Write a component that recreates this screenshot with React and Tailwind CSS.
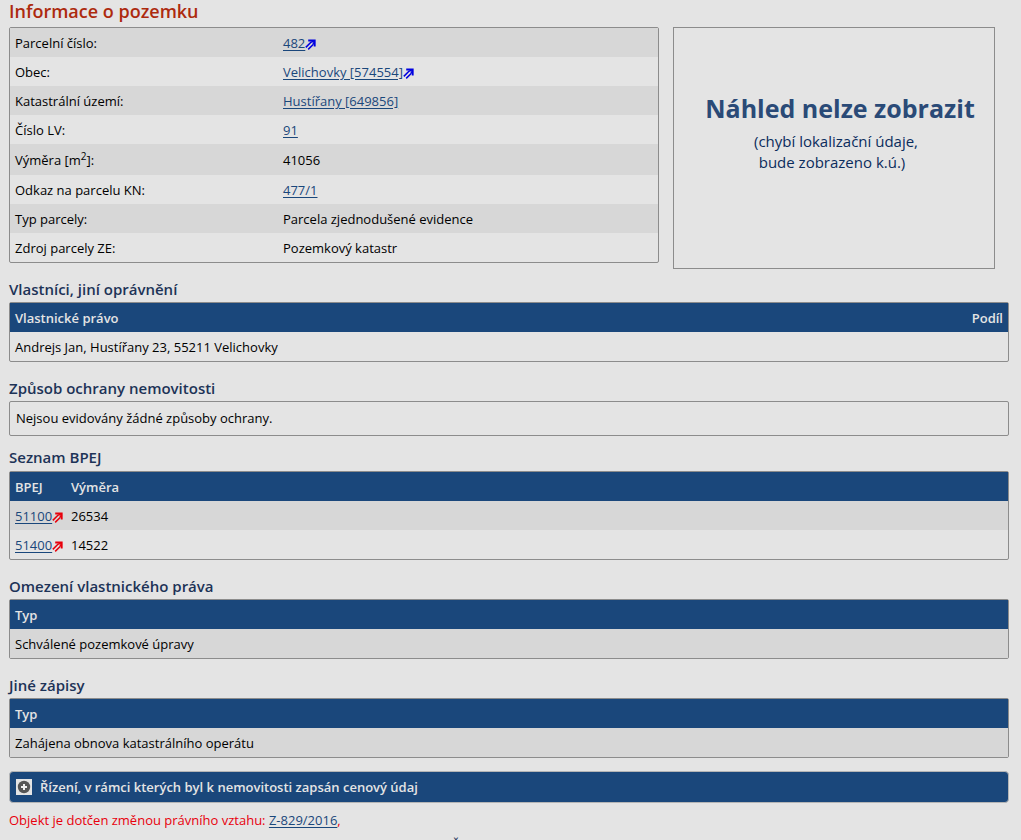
import React from "react";

function ExternalArrow({ className }) {
  return (
    <svg viewBox="0 0 11 11" className={`inline-block h-[11px] w-[11px] align-[-2px] ${className}`} fill="none" stroke="currentColor" aria-hidden="true">
      <path d="M0.8 8.4 L6.2 3 M3.2 10.4 L8.4 5.2" strokeWidth="1.5" />
      <path d="M3.2 1.5 H9.7 V7.6" strokeWidth="1.9" />
      <path d="M6.2 3.4 L9 1.6 M8 5 L9.6 3" strokeWidth="1.6" />
    </svg>
  );
}

function Link({ children, arrow }) {
  return (
    <a href="#" className="text-[#1a477b] underline underline-offset-2">
      {children}
      {arrow && <ExternalArrow className={arrow} />}
    </a>
  );
}

function Heading({ children, tight }) {
  return (
    <h2 className={`${tight ? "pt-[9px] pb-[2px]" : "pt-[14px] pb-px"} text-[15px] leading-6 font-semibold text-[#1d3357]`}>
      {children}
    </h2>
  );
}

const tableClass = "w-full border-separate border-spacing-0 rounded-[2px] border border-[#8c8c8c] text-left";
const headRow = "h-[29px] bg-[#1a477b] text-[#e4e4e4]";
const headCell = "px-[5px] font-semibold";
const shaded = "h-[29px] bg-[#d7d7d7]";
const plain = "h-[29px]";

const details = [
  ["Parcelní číslo:", <Link arrow="text-[#0000e0]">482</Link>],
  ["Obec:", <Link arrow="text-[#0000e0]">Velichovky [574554]</Link>],
  ["Katastrální území:", <Link>Hustířany [649856]</Link>],
  ["Číslo LV:", <Link>91</Link>],
  [<>Výměra [m<sup className="text-[10px]">2</sup>]:</>, "41056"],
  ["Odkaz na parcelu KN:", <Link>477/1</Link>],
  ["Typ parcely:", "Parcela zjednodušené evidence"],
  ["Zdroj parcely ZE:", "Pozemkový katastr"],
];

function TypeTable({ value }) {
  return (
    <table className={tableClass}>
      <thead>
        <tr className={headRow}>
          <th scope="col" className={headCell}>Typ</th>
        </tr>
      </thead>
      <tbody>
        <tr className={shaded}>
          <td className="px-[5px]">{value}</td>
        </tr>
      </tbody>
    </table>
  );
}

export default function App() {
  return (
    <main className="h-screen overflow-hidden bg-[#e4e4e4] pr-3 pl-[9px] font-['Open_Sans','Noto_Sans',sans-serif] text-[13px] leading-5 text-black">
      <h1 className="pb-[5px] text-[18px] leading-[22px] font-semibold text-[#ad2a0e]">Informace o pozemku</h1>

      <div className="flex items-start gap-[14px]">
        <table className={`${tableClass} flex-[650]`}>
          <tbody>
            {details.map(([label, value], i) => (
              <tr key={i} className={i % 2 === 0 ? (i === 4 ? "h-[31px] bg-[#d7d7d7]" : shaded) : plain}>
                <th scope="row" className="w-[268px] px-[5px] font-normal">{label}</th>
                <td className="px-[5px]">{value}</td>
              </tr>
            ))}
          </tbody>
        </table>
        <div className="mr-[14px] flex min-h-[242px] w-[322px] shrink-0 flex-col items-center border border-[#8c8c8c] pt-16 pl-3 text-[#0b2c5c]">
          <strong className="text-[25px] leading-8 font-bold text-[#2a4a77]">Náhled nelze zobrazit</strong>
          <p className="mt-[7px] pr-2 text-center text-[15px] leading-[21px]">
            <span className="block">(chybí lokalizační údaje,</span>
            <span className="block pr-2">bude zobrazeno k.ú.)</span>
          </p>
        </div>
      </div>

      <div className="-mt-[6px]">
        <Heading>Vlastníci, jiní oprávnění</Heading>
        <table className={tableClass}>
          <thead>
            <tr className={headRow}>
              <th scope="col" className={headCell}>Vlastnické právo</th>
              <th scope="col" className={`${headCell} text-right`}>Podíl</th>
            </tr>
          </thead>
          <tbody>
            <tr className={plain}>
              <td className="px-[5px]">Andrejs Jan, Hustířany 23, 55211 Velichovky</td>
              <td />
            </tr>
          </tbody>
        </table>
      </div>

      <Heading>Způsob ochrany nemovitosti</Heading>
      <p className="rounded-[2px] border border-[#8c8c8c] px-[6px] py-[7px] leading-[19px]">Nejsou evidovány žádné způsoby ochrany.</p>

      <Heading tight>Seznam BPEJ</Heading>
      <table className={tableClass}>
        <thead>
          <tr className={headRow}>
            <th scope="col" className={`${headCell} w-14`}>BPEJ</th>
            <th scope="col" className={headCell}>Výměra</th>
          </tr>
        </thead>
        <tbody>
          <tr className={shaded}>
            <td className="pl-[5px] whitespace-nowrap"><Link arrow="text-[#e8000c]">51100</Link></td>
            <td className="px-[5px]">26534</td>
          </tr>
          <tr className={plain}>
            <td className="pl-[5px] whitespace-nowrap"><Link arrow="text-[#e8000c]">51400</Link></td>
            <td className="px-[5px]">14522</td>
          </tr>
        </tbody>
      </table>

      <Heading>Omezení vlastnického práva</Heading>
      <TypeTable value="Schválené pozemkové úpravy" />

      <Heading>Jiné zápisy</Heading>
      <TypeTable value="Zahájena obnova katastrálního operátu" />

      <button type="button" className="mt-[13px] flex w-full items-center gap-2 rounded-[4px] border border-[#b5b5b5] bg-[#1a477b] px-[6px] py-[5px] text-left font-semibold text-[#e4e4e4]">
        <svg viewBox="0 0 16 16" className="h-4 w-4 shrink-0" aria-hidden="true">
          <rect width="16" height="16" fill="#e4e4e4" />
          <circle cx="8" cy="8" r="6.2" fill="#555" />
          <path d="M8 5v6M5 8h6" stroke="#eee" strokeWidth="2" />
        </svg>
        Řízení, v rámci kterých byl k nemovitosti zapsán cenový údaj
      </button>

      <p className="mt-[7px] text-[#e8000c]">
        Objekt je dotčen změnou právního vztahu: <Link>Z-829/2016</Link>,
      </p>
      <p className="mt-[5px] pr-[108px] text-center text-[#1d3357]">Č</p>
    </main>
  );
}
